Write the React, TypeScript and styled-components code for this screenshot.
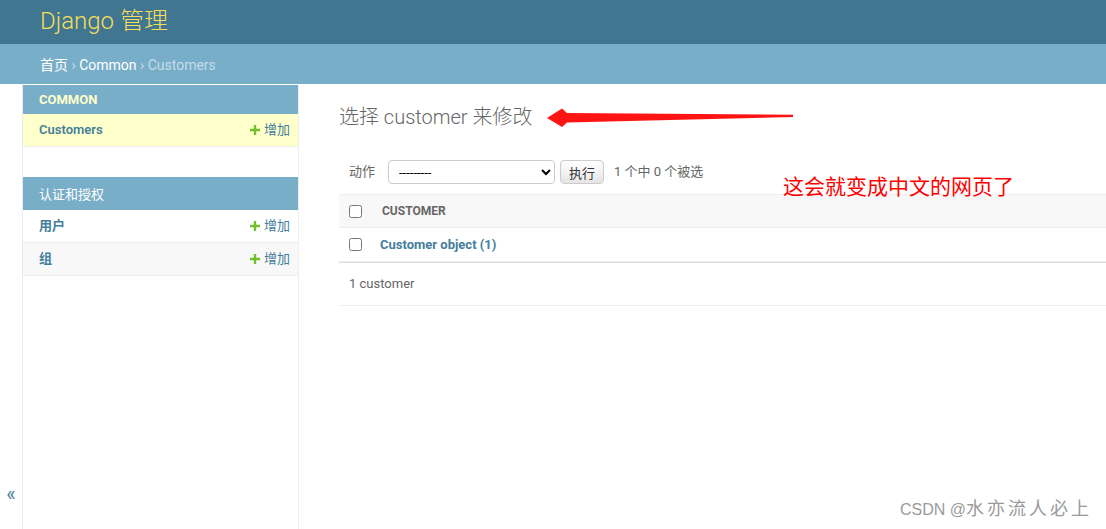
import React from 'react';
import styled, { createGlobalStyle } from 'styled-components';

const GlobalStyle = createGlobalStyle`
  html, body {
    margin: 0;
    padding: 0;
    background: #fff;
  }
  body {
    font-family: Roboto, "Noto Sans CJK SC", "Lucida Grande", Verdana, sans-serif;
    font-size: 14px;
    color: #333;
  }
  * {
    box-sizing: border-box;
  }
`;

const Page = styled.div`
  position: relative;
  display: flex;
  flex-direction: column;
  min-height: 100vh;
  overflow: hidden;
`;

const Header = styled.header`
  height: 44px;
  padding: 9px 40px 11px;
  background: #417690;
`;

const SiteName = styled.h1`
  margin: 0;
  font-size: 24px;
  line-height: 24px;
  font-weight: 300;
  color: #f5dd5d;
`;

const Breadcrumbs = styled.div`
  height: 40px;
  padding: 11px 40px 9px;
  background: #79aec8;
  color: #c4dce8;
  font-size: 14px;
  line-height: 20px;
`;

const CrumbLink = styled.a`
  color: #fff;
  text-decoration: none;
`;

const Main = styled.div`
  flex: 1;
  display: flex;
`;

const ToggleButton = styled.button`
  flex: 0 0 23px;
  display: flex;
  align-items: flex-end;
  justify-content: center;
  padding: 0 0 23px;
  border: 0;
  border-right: 1px solid #eaeaea;
  background: #fff;
  color: #447e9b;
  font-family: Roboto, sans-serif;
  font-size: 20px;
  line-height: 24px;
`;

const NavSidebar = styled.nav`
  flex: 0 0 276px;
  border-top: 1px solid transparent;
  border-right: 1px solid #eee;
`;

const Module = styled.div`
  margin-bottom: 30px;
`;

const Caption = styled.div<{ $current?: boolean }>`
  padding: 7px 16px;
  background: #79aec8;
  color: ${({ $current }) => ($current ? '#ffc' : '#fff')};
  font-size: 13px;
  line-height: normal;
  font-weight: ${({ $current }) => ($current ? 700 : 400)};
  text-transform: uppercase;
`;

const ModelRow = styled.div<{ $bg: string }>`
  display: flex;
  align-items: center;
  justify-content: space-between;
  height: 33px;
  padding: 0 8px 0 16px;
  background: ${({ $bg }) => $bg};
  border-bottom: 1px solid #eee;
  font-size: 13px;
  line-height: 16px;
`;

const ModelName = styled.a`
  color: #447e9b;
  font-weight: 600;
  text-decoration: none;
`;

const AddLink = styled.a`
  display: flex;
  align-items: center;
  gap: 4px;
  color: #447e9b;
  text-decoration: none;
`;

const Content = styled.main`
  flex: 1;
  padding: 20px 0 0 40px;
  min-width: 0;
`;

const Title = styled.h1`
  margin: 0 0 20px;
  font-size: 20px;
  line-height: 26px;
  font-weight: 300;
  color: #666;
`;

const Actions = styled.div`
  display: flex;
  align-items: center;
  padding: 10px;
  line-height: 24px;
  font-size: 13px;
  color: #666;
`;

const ActionSelect = styled.select`
  width: 167px;
  height: 24px;
  margin: 0 5px 0 13px;
  padding: 0 0 0 6px;
  border: 1px solid #ccc;
  border-radius: 4px;
  background: #fff;
  color: #000;
  font-family: Roboto, sans-serif;
  font-size: 13px;
`;

const GoButton = styled.button`
  height: 24px;
  padding: 0 8px;
  border: 1px solid #ccc;
  border-radius: 4px;
  background: #fff;
  box-shadow: 0 -15px 20px -10px rgba(0, 0, 0, 0.15) inset;
  color: #333;
  font-family: "Noto Sans CJK SC", sans-serif;
  font-size: 13px;
  line-height: 1;
`;

const Counter = styled.span`
  margin-left: 10px;
`;

const ResultRow = styled.div<{ $head?: boolean }>`
  display: flex;
  align-items: center;
  height: 34px;
  background: ${({ $head }) => ($head ? '#f8f8f8' : '#fff')};
  border-top: ${({ $head }) => ($head ? '1px solid #eee' : 'none')};
  border-bottom: 1px solid #eee;
`;

const CheckCell = styled.div`
  flex: 0 0 33px;
  display: flex;
  align-items: center;
  padding-left: 10px;
`;

const Check = styled.input`
  width: 13px;
  height: 13px;
  margin: 0;
`;

const HeadCell = styled.div`
  padding: 0 0 0 10px;
  font-size: 12px;
  font-weight: 700;
  color: #666;
  text-transform: uppercase;
`;

const ObjectLink = styled.a`
  padding-left: 8px;
  font-size: 13px;
  font-weight: 700;
  color: #447e9b;
  text-decoration: none;
`;

const Paginator = styled.p`
  margin: 0;
  padding: 10px;
  border-top: 1px solid #ddd;
  border-bottom: 1px solid #eee;
  font-size: 13px;
  line-height: 22px;
  color: #666;
`;

const ArrowMark = styled.svg`
  position: absolute;
  left: 540px;
  top: 104px;
  width: 260px;
  height: 28px;
`;

const Annotation = styled.div`
  position: absolute;
  left: 783px;
  top: 172px;
  font-family: "Noto Sans CJK SC", sans-serif;
  font-size: 21px;
  line-height: 26px;
  color: #ff0000;
  white-space: nowrap;
`;

const Watermark = styled.div`
  position: absolute;
  left: 900px;
  top: 495px;
  font-family: "Liberation Sans", "Noto Sans CJK SC", sans-serif;
  font-size: 16px;
  line-height: 24px;
  color: #9a9a9a;
  text-shadow: 0 0 2px #fff;
  white-space: nowrap;
`;

const WatermarkName = styled.span`
  font-family: "Noto Sans CJK SC", sans-serif;
  font-size: 18px;
  letter-spacing: 3px;
`;

const PlusIcon = () => (
  <svg width="10" height="10" viewBox="0 0 10 10">
    <path d="M3.8 0h2.4v3.8H10v2.4H6.2V10H3.8V6.2H0V3.8h3.8z" fill="#70bf2b" />
  </svg>
);

const sidebar = [
  {
    label: 'Common',
    current: true,
    models: [{ name: 'Customers', current: true }],
  },
  {
    label: '认证和授权',
    current: false,
    models: [
      { name: '用户', current: false },
      { name: '组', current: false },
    ],
  },
];

export default function App() {
  return (
    <Page>
      <GlobalStyle />
      <Header>
        <SiteName>Django 管理</SiteName>
      </Header>
      <Breadcrumbs>
        <CrumbLink href="#">首页</CrumbLink> › <CrumbLink href="#">Common</CrumbLink> › Customers
      </Breadcrumbs>
      <Main>
        <ToggleButton>«</ToggleButton>
        <NavSidebar>
          {sidebar.map((app) => (
            <Module key={app.label}>
              <Caption $current={app.current}>{app.label}</Caption>
              {app.models.map((m, i) => (
                <ModelRow key={m.name} $bg={m.current ? '#ffc' : i % 2 ? '#f8f8f8' : '#fff'}>
                  <ModelName href="#">{m.name}</ModelName>
                  <AddLink href="#">
                    <PlusIcon />
                    增加
                  </AddLink>
                </ModelRow>
              ))}
            </Module>
          ))}
        </NavSidebar>
        <Content>
          <Title>选择 customer 来修改</Title>
          <Actions>
            动作
            <ActionSelect defaultValue="">
              <option value="">---------</option>
            </ActionSelect>
            <GoButton>执行</GoButton>
            <Counter>1 个中 0 个被选</Counter>
          </Actions>
          <ResultRow $head>
            <CheckCell>
              <Check type="checkbox" />
            </CheckCell>
            <HeadCell>Customer</HeadCell>
          </ResultRow>
          <ResultRow>
            <CheckCell>
              <Check type="checkbox" />
            </CheckCell>
            <ObjectLink href="#">Customer object (1)</ObjectLink>
          </ResultRow>
          <Paginator>1 customer</Paginator>
        </Content>
      </Main>

      <ArrowMark viewBox="540 104 260 28">
        <polygon
          points="547,118 562,108.5 567,113 793,114.8 793,117 567,122.5 562,127"
          fill="#ff1414"
        />
      </ArrowMark>
      <Annotation>这会就变成中文的网页了</Annotation>
      <Watermark>
        CSDN @<WatermarkName>水亦流人必上</WatermarkName>
      </Watermark>
    </Page>
  );
}
